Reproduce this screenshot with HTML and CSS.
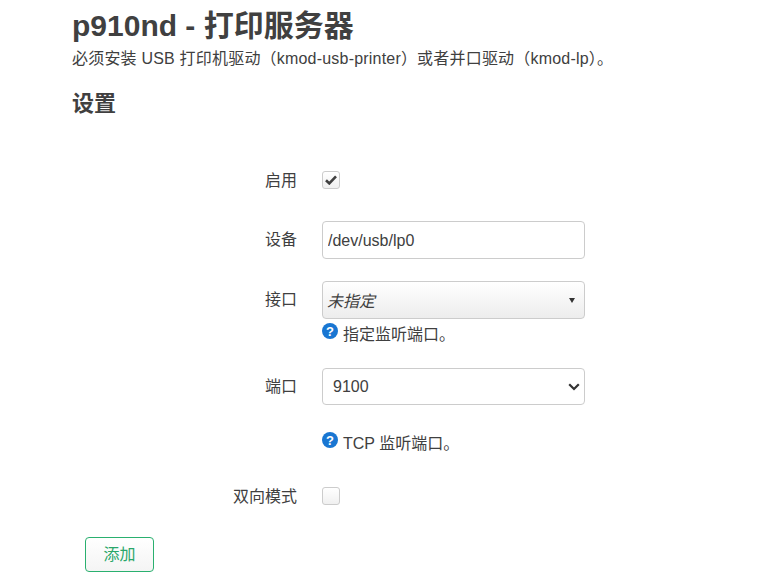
FILE: index.html
```html
<!DOCTYPE html>
<html lang="zh-CN">
<head>
  <meta charset="UTF-8">
  <title>p910nd - 打印服务器</title>
  <link rel="stylesheet" href="styles.css">
</head>
<body>
  <div class="container">
    <h1>p910nd - 打印服务器</h1>
    <p class="desc">必须安装 USB 打印机驱动（kmod-usb-printer）或者并口驱动（kmod-lp）。</p>
    <h2>设置</h2>

    <div class="form">
      <div class="row row-enable">
        <label class="label">启用</label>
        <div class="field">
          <span class="check">
            <svg width="12" height="10" viewBox="0 0 12 10"><path d="M1 5.2 4.3 8.4 11 1.4" fill="none" stroke="#404040" stroke-width="2.6"/></svg>
          </span>
        </div>
      </div>

      <div class="row row-device">
        <label class="label">设备</label>
        <div class="field">
          <input class="text-input" type="text" value="/dev/usb/lp0">
        </div>
      </div>

      <div class="row row-iface">
        <label class="label">接口</label>
        <div class="field">
          <div class="select select-grad">
            <em>未指定</em>
            <svg width="6" height="5" viewBox="0 0 6 5"><path d="M0 0H6L3 5Z" fill="#333"/></svg>
          </div>
          <div class="help">
            <svg class="help-icon" width="16" height="16" viewBox="0 0 16 16"><circle cx="8" cy="8" r="8" fill="#1976d2"/><text x="8" y="13" text-anchor="middle" class="help-mark">?</text></svg>
            <span>指定监听端口。</span>
          </div>
        </div>
      </div>

      <div class="row row-port">
        <label class="label">端口</label>
        <div class="field">
          <div class="select select-plain">
            <span>9100</span>
            <svg width="12" height="8" viewBox="0 0 12 8"><path d="M1.2 1.2 6 6 10.8 1.2" fill="none" stroke="#333" stroke-width="2.2"/></svg>
          </div>
          <div class="help help-far">
            <svg class="help-icon" width="16" height="16" viewBox="0 0 16 16"><circle cx="8" cy="8" r="8" fill="#1976d2"/><text x="8" y="13" text-anchor="middle" class="help-mark">?</text></svg>
            <span>TCP 监听端口。</span>
          </div>
        </div>
      </div>

      <div class="row row-bidi">
        <label class="label">双向模式</label>
        <div class="field">
          <span class="check"></span>
        </div>
      </div>
    </div>

    <button class="btn-add" type="button">添加</button>
  </div>
</body>
</html>
```

FILE: styles.css
```css
body {
  margin: 0;
  font-family: "Liberation Sans", "Noto Sans CJK SC", sans-serif;
  font-size: 16px;
  color: #404040;
  background-color: #fff;
}

.container {
  padding: 8px 0 0 72px;
}

h1 {
  margin: 0;
  font-size: 30px;
  line-height: 36px;
  font-weight: bold;
  color: #404040;
}

.desc {
  margin: 5px 0 0;
  font-size: 16px;
  line-height: 20px;
  letter-spacing: 0.2px;
}

h2 {
  margin: 20px 0 0;
  font-size: 22px;
  line-height: 30px;
  font-weight: bold;
}

.form {
  margin-top: 52px;
}

.row {
  display: flex;
  align-items: flex-start;
}

.label {
  width: 225px;
  text-align: right;
  line-height: 20px;
}

.field {
  margin-left: 25px;
  width: 263px;
}

.row-device {
  margin-top: 30px;
}

.row-iface {
  margin-top: 22px;
}

.row-port {
  margin-top: 21px;
}

.row-bidi {
  margin-top: 31px;
}

.row-device .label,
.row-iface .label,
.row-port .label {
  margin-top: 9px;
}

.check {
  display: flex;
  align-items: center;
  justify-content: center;
  box-sizing: border-box;
  width: 18px;
  height: 18px;
  border: 1px solid #ccc;
  border-radius: 3px;
  background: linear-gradient(#fff, #f0f0f0);
}

.text-input {
  display: block;
  box-sizing: border-box;
  width: 263px;
  height: 38px;
  padding: 1px 5px 0;
  border: 1px solid #ccc;
  border-radius: 4px;
  font: 16px "Liberation Sans", sans-serif;
  color: #404040;
}

.select {
  display: flex;
  align-items: center;
  justify-content: space-between;
  box-sizing: border-box;
  width: 263px;
  border: 1px solid #ccc;
  border-radius: 4px;
  color: #404040;
}

.select-grad {
  height: 38px;
  padding: 0 9px 0 4px;
  background: linear-gradient(#fff, #ededed);
}

.select-plain {
  height: 37px;
  padding: 0 4px 0 10px;
  background-color: #fff;
}

.help {
  display: flex;
  align-items: flex-start;
  margin-top: 4px;
  line-height: 24px;
}

.help-far {
  margin-top: 27px;
}

.help-icon {
  margin-right: 5px;
}

.help-mark {
  font: bold 13px "Liberation Sans", sans-serif;
  fill: #fff;
}

.btn-add {
  display: block;
  box-sizing: border-box;
  width: 69px;
  height: 35px;
  margin: 30px 0 0 13px;
  padding: 0 0 3px;
  border: 1px solid #2ab06f;
  border-radius: 4px;
  background: linear-gradient(#fff, #f4f4f4);
  font: 16px "Liberation Sans", "Noto Sans CJK SC", sans-serif;
  color: #2aa76a;
}
```
